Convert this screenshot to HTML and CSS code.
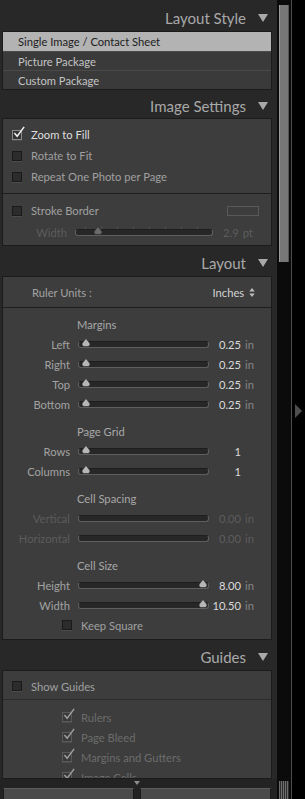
FILE: index.html
```html
<!DOCTYPE html>
<html lang="en">
<head>
    <meta charset="UTF-8">
    <meta name="viewport" content="width=device-width, initial-scale=1.0">
    <title>Print - Layout</title>
    <link rel="stylesheet" href="styles.css">
</head>
<body>
<div class="app">
    <div class="panel">
        <div class="group-head first"><span>Layout Style</span><i class="tri"></i></div>
        <div class="box list">
            <div class="item selected">Single Image / Contact Sheet</div>
            <div class="item">Picture Package</div>
            <div class="item">Custom Package</div>
        </div>

        <div class="group-head short"><span>Image Settings</span><i class="tri"></i></div>
        <div class="box">
            <div class="sect opts">
                <div class="check-row on"><span class="cb"><svg class="tick" viewBox="0 0 14 14"><path d="M1.5 7.5 L4.5 11 L12 1"/></svg></span>Zoom to Fill</div>
                <div class="check-row"><span class="cb"></span>Rotate to Fit</div>
                <div class="check-row"><span class="cb"></span>Repeat One Photo per Page</div>
            </div>
            <div class="sect stroke">
                <div class="check-row"><span class="cb"></span>Stroke Border<span class="swatch"></span></div>
                <div class="slider-row stroke-width off">
                    <span class="label">Width</span>
                    <span class="slider ticks"><svg class="thumb" style="left:18px" viewBox="0 0 10 9"><path d="M5 0.5 L8.6 5 C9.6 6.6 8.6 8.5 6.5 8.5 L3.5 8.5 C1.4 8.5 0.4 6.6 1.4 5 Z"/></svg></span>
                    <span class="val">2.9</span><span class="unit">pt</span>
                </div>
            </div>
        </div>

        <div class="group-head"><span>Layout</span><i class="tri"></i></div>
        <div class="box">
            <div class="ruler">
                <span>Ruler Units :</span>
                <span class="units">Inches <svg class="updown" viewBox="0 0 6 10"><path d="M3 0 L6 4 L0 4 Z M3 10 L6 6 L0 6 Z"/></svg></span>
            </div>
            <div class="sect layout-body">
                <div class="sub-title">Margins</div>
                <div class="slider-row">
                    <span class="label">Left</span>
                    <span class="slider"><svg class="thumb" style="left:3px" viewBox="0 0 10 9"><path d="M5 0.5 L8.6 5 C9.6 6.6 8.6 8.5 6.5 8.5 L3.5 8.5 C1.4 8.5 0.4 6.6 1.4 5 Z"/></svg></span>
                    <span class="val">0.25</span><span class="unit">in</span>
                </div>
                <div class="slider-row">
                    <span class="label">Right</span>
                    <span class="slider"><svg class="thumb" style="left:3px" viewBox="0 0 10 9"><path d="M5 0.5 L8.6 5 C9.6 6.6 8.6 8.5 6.5 8.5 L3.5 8.5 C1.4 8.5 0.4 6.6 1.4 5 Z"/></svg></span>
                    <span class="val">0.25</span><span class="unit">in</span>
                </div>
                <div class="slider-row">
                    <span class="label">Top</span>
                    <span class="slider"><svg class="thumb" style="left:3px" viewBox="0 0 10 9"><path d="M5 0.5 L8.6 5 C9.6 6.6 8.6 8.5 6.5 8.5 L3.5 8.5 C1.4 8.5 0.4 6.6 1.4 5 Z"/></svg></span>
                    <span class="val">0.25</span><span class="unit">in</span>
                </div>
                <div class="slider-row">
                    <span class="label">Bottom</span>
                    <span class="slider"><svg class="thumb" style="left:3px" viewBox="0 0 10 9"><path d="M5 0.5 L8.6 5 C9.6 6.6 8.6 8.5 6.5 8.5 L3.5 8.5 C1.4 8.5 0.4 6.6 1.4 5 Z"/></svg></span>
                    <span class="val">0.25</span><span class="unit">in</span>
                </div>

                <div class="sub-title">Page Grid</div>
                <div class="slider-row">
                    <span class="label">Rows</span>
                    <span class="slider"><svg class="thumb" style="left:3px" viewBox="0 0 10 9"><path d="M5 0.5 L8.6 5 C9.6 6.6 8.6 8.5 6.5 8.5 L3.5 8.5 C1.4 8.5 0.4 6.6 1.4 5 Z"/></svg></span>
                    <span class="val">1</span><span class="unit"></span>
                </div>
                <div class="slider-row">
                    <span class="label">Columns</span>
                    <span class="slider"><svg class="thumb" style="left:3px" viewBox="0 0 10 9"><path d="M5 0.5 L8.6 5 C9.6 6.6 8.6 8.5 6.5 8.5 L3.5 8.5 C1.4 8.5 0.4 6.6 1.4 5 Z"/></svg></span>
                    <span class="val">1</span><span class="unit"></span>
                </div>

                <div class="sub-title off">Cell Spacing</div>
                <div class="slider-row off">
                    <span class="label">Vertical</span>
                    <span class="slider"></span>
                    <span class="val">0.00</span><span class="unit">in</span>
                </div>
                <div class="slider-row off">
                    <span class="label">Horizontal</span>
                    <span class="slider"></span>
                    <span class="val">0.00</span><span class="unit">in</span>
                </div>

                <div class="sub-title">Cell Size</div>
                <div class="slider-row">
                    <span class="label">Height</span>
                    <span class="slider"><svg class="thumb" style="left:120px" viewBox="0 0 10 9"><path d="M5 0.5 L8.6 5 C9.6 6.6 8.6 8.5 6.5 8.5 L3.5 8.5 C1.4 8.5 0.4 6.6 1.4 5 Z"/></svg></span>
                    <span class="val">8.00</span><span class="unit">in</span>
                </div>
                <div class="slider-row">
                    <span class="label">Width</span>
                    <span class="slider"><svg class="thumb" style="left:120px" viewBox="0 0 10 9"><path d="M5 0.5 L8.6 5 C9.6 6.6 8.6 8.5 6.5 8.5 L3.5 8.5 C1.4 8.5 0.4 6.6 1.4 5 Z"/></svg></span>
                    <span class="val">10.50</span><span class="unit">in</span>
                </div>
                <div class="check-row indent"><span class="cb"></span>Keep Square</div>
            </div>
        </div>

        <div class="group-head"><span>Guides</span><i class="tri"></i></div>
        <div class="box guides">
            <div class="check-row show"><span class="cb"></span>Show Guides</div>
            <div class="guide-list">
                <div class="check-row indent dim on"><span class="cb"><svg class="tick" viewBox="0 0 14 14"><path d="M1.5 7.5 L4.5 11 L12 1"/></svg></span>Rulers</div>
                <div class="check-row indent dim on"><span class="cb"><svg class="tick" viewBox="0 0 14 14"><path d="M1.5 7.5 L4.5 11 L12 1"/></svg></span>Page Bleed</div>
                <div class="check-row indent dim on"><span class="cb"><svg class="tick" viewBox="0 0 14 14"><path d="M1.5 7.5 L4.5 11 L12 1"/></svg></span>Margins and Gutters</div>
                <div class="check-row indent dim on"><span class="cb"><svg class="tick" viewBox="0 0 14 14"><path d="M1.5 7.5 L4.5 11 L12 1"/></svg></span>Image Cells</div>
            </div>
        </div>

        <div class="panel-foot"><i class="caret"></i></div>
        <div class="buttons">
            <button class="btn"></button>
            <button class="btn"></button>
        </div>
    </div>

    <div class="scroll">
        <div class="scroll-thumb"></div>
        <div class="grip"></div>
    </div>

    <div class="gutter"><i class="collapse"></i></div>
</div>
</body>
</html>
```

FILE: styles.css
```css
* {
    box-sizing: border-box;
}
body {
    margin: 0;
    background: #000;
    font-family: Lato, "Open Sans", sans-serif;
    font-size: 11.2px;
    color: #a2a2a2;
}
.app {
    display: flex;
    width: 305px;
    height: 799px;
    overflow: hidden;
}
.panel {
    width: 277px;
    flex: none;
    background: #282828;
    display: flex;
    flex-direction: column;
}

/* section headers */
.group-head {
    height: 30px;
    flex: none;
    display: flex;
    align-items: center;
    justify-content: flex-end;
    padding-top: 4px;
    padding-right: 9px;
    font-size: 15px;
    color: #a9a9a9;
}
.group-head.first {
    height: 31px;
    padding-top: 5px;
}
.group-head.short {
    height: 28px;
}
.tri {
    width: 0;
    height: 0;
    margin-left: 12px;
    border-left: 5px solid transparent;
    border-right: 5px solid transparent;
    border-top: 8px solid #a9a9a9;
}

.box {
    flex: none;
    margin-left: 2px;
    width: 270px;
    border: 1px solid #1b1b1b;
    background: #3d3d3d;
}

/* layout style list */
.list {
    background: #3a3a3a;
}
.item {
    height: 19px;
    line-height: 19px;
    padding-left: 15px;
    color: #c4c4c4;
}
.item + .item {
    border-top: 1px solid #4a4a4a;
}
.item.selected {
    background: #b3b3b3;
    color: #1c1c1c;
}

.sect + .sect {
    border-top: 1px solid #1e1e1e;
}

/* checkboxes */
.check-row {
    height: 21px;
    display: flex;
    align-items: center;
    padding-top: 2px;
    padding-left: 9px;
    color: #a0a0a0;
}
.check-row.on {
    color: #dedede;
}
.cb {
    position: relative;
    width: 10px;
    height: 10px;
    margin-right: 9px;
    background: #2c2c2c;
    border: 1px solid #1a1a1a;
    box-shadow: 0 1px 0 #4c4c4c;
}
.on .cb {
    border-color: #8c8c8c;
    background: #333;
}
.tick {
    position: absolute;
    left: 0;
    top: -5px;
    width: 13px;
    height: 13px;
}
.tick path {
    fill: none;
    stroke: #f2f2f2;
    stroke-width: 1.6;
}
.opts {
    padding: 4px 0 7px;
}
.stroke {
    padding: 5px 0 4px;
}
.swatch {
    margin-left: auto;
    margin-right: 12px;
    width: 32px;
    height: 10px;
    border: 1px solid #595959;
}

/* sliders */
.slider-row {
    height: 20px;
    display: flex;
    align-items: center;
}
.label,
.val,
.unit {
    padding-top: 3px;
}
.label {
    width: 67px;
    text-align: right;
}
.slider {
    position: relative;
    width: 131px;
    height: 10px;
    margin-left: 8px;
}
.slider::before {
    content: "";
    position: absolute;
    left: 0;
    right: 0;
    top: 3px;
    height: 5px;
    border-radius: 3px;
    background: #272727;
    border: 1px solid #5f5f5f;
    border-top-color: #1e1e1e;
}
.thumb {
    position: absolute;
    top: 0;
    width: 10px;
    height: 9px;
}
.thumb path {
    fill: #b6b6b6;
    stroke: #2a2a2a;
    stroke-width: 0.6;
}
.val {
    width: 32px;
    text-align: right;
    color: #dadada;
}
.unit {
    margin-left: 4px;
    color: #858585;
}
.off,
.off .val,
.off .unit {
    color: #5c5c5c;
}

.stroke-width {
    height: 21px;
}
.stroke-width .label {
    width: 64px;
}
.stroke-width .slider {
    width: 138px;
}
.stroke-width .val {
    width: auto;
    margin-left: 10px;
}
.stroke-width .thumb path {
    fill: #6a6a6a;
}
.ticks::after {
    content: "";
    position: absolute;
    left: 10px;
    right: 8px;
    top: 0;
    height: 3px;
    background: repeating-linear-gradient(90deg, #4d4d4d 0 1px, transparent 1px 16px);
}

/* layout box */
.ruler {
    height: 31px;
    display: flex;
    align-items: center;
    justify-content: space-between;
    padding: 0 16px 0 29px;
    border-bottom: 1px solid #1e1e1e;
}
.units {
    color: #d2d2d2;
}
.updown {
    width: 6px;
    height: 9px;
    margin-left: 2px;
}
.updown path {
    fill: #bdbdbd;
}
.layout-body {
    padding: 5px 0 5px;
}
.sub-title {
    height: 20px;
    line-height: 20px;
    padding-top: 2px;
    padding-left: 74px;
    color: #a8a8a8;
}
.slider-row + .sub-title {
    margin-top: 7px;
}
.check-row.indent {
    height: 20px;
    padding-left: 59px;
}

/* guides */
.guides {
    height: 109px;
    overflow: hidden;
}
.check-row.show {
    height: 29px;
    border-bottom: 1px solid #2c2c2c;
}
.guide-list {
    padding-top: 6px;
}
.check-row.dim {
    color: #6c6c6c;
}
.dim .cb {
    border-color: #5a5a5a;
    background: #3a3a3a;
}
.dim .tick path {
    stroke: #9c9c9c;
}

/* footer */
.panel-foot {
    height: 9px;
    flex: none;
    background: #232323;
    position: relative;
}
.caret {
    position: absolute;
    left: 134px;
    top: 2px;
    border-left: 3px solid transparent;
    border-right: 3px solid transparent;
    border-top: 4px solid #8d8d8d;
}
.buttons {
    display: flex;
    gap: 6px;
    padding-left: 3px;
    background: #232323;
}
.btn {
    width: 131px;
    height: 22px;
    background: #4a4a4a;
    border: 1px solid #1b1b1b;
    border-top-color: #5c5c5c;
}

/* scrollbar + side gutter */
.scroll {
    width: 14px;
    flex: none;
    background: #0b0b0b;
    display: flex;
    flex-direction: column;
    justify-content: space-between;
    padding: 5px 0 0 2px;
}
.scroll-thumb {
    width: 10px;
    height: 257px;
    background: #777;
    border-left: 1px solid #9a9a9a;
    border-right: 1px solid #555;
}
.grip {
    width: 10px;
    height: 18px;
    background: repeating-linear-gradient(90deg, #6d6d6d 0 1px, #2e2e2e 1px 2px);
}
.gutter {
    flex: 1;
    border-left: 1px solid #4c4c4c;
    background: #000;
    display: flex;
    justify-content: center;
    padding-top: 404px;
}
.collapse {
    width: 0;
    height: 0;
    border-top: 7px solid transparent;
    border-bottom: 7px solid transparent;
    border-left: 7px solid #4e4e4e;
}
```
